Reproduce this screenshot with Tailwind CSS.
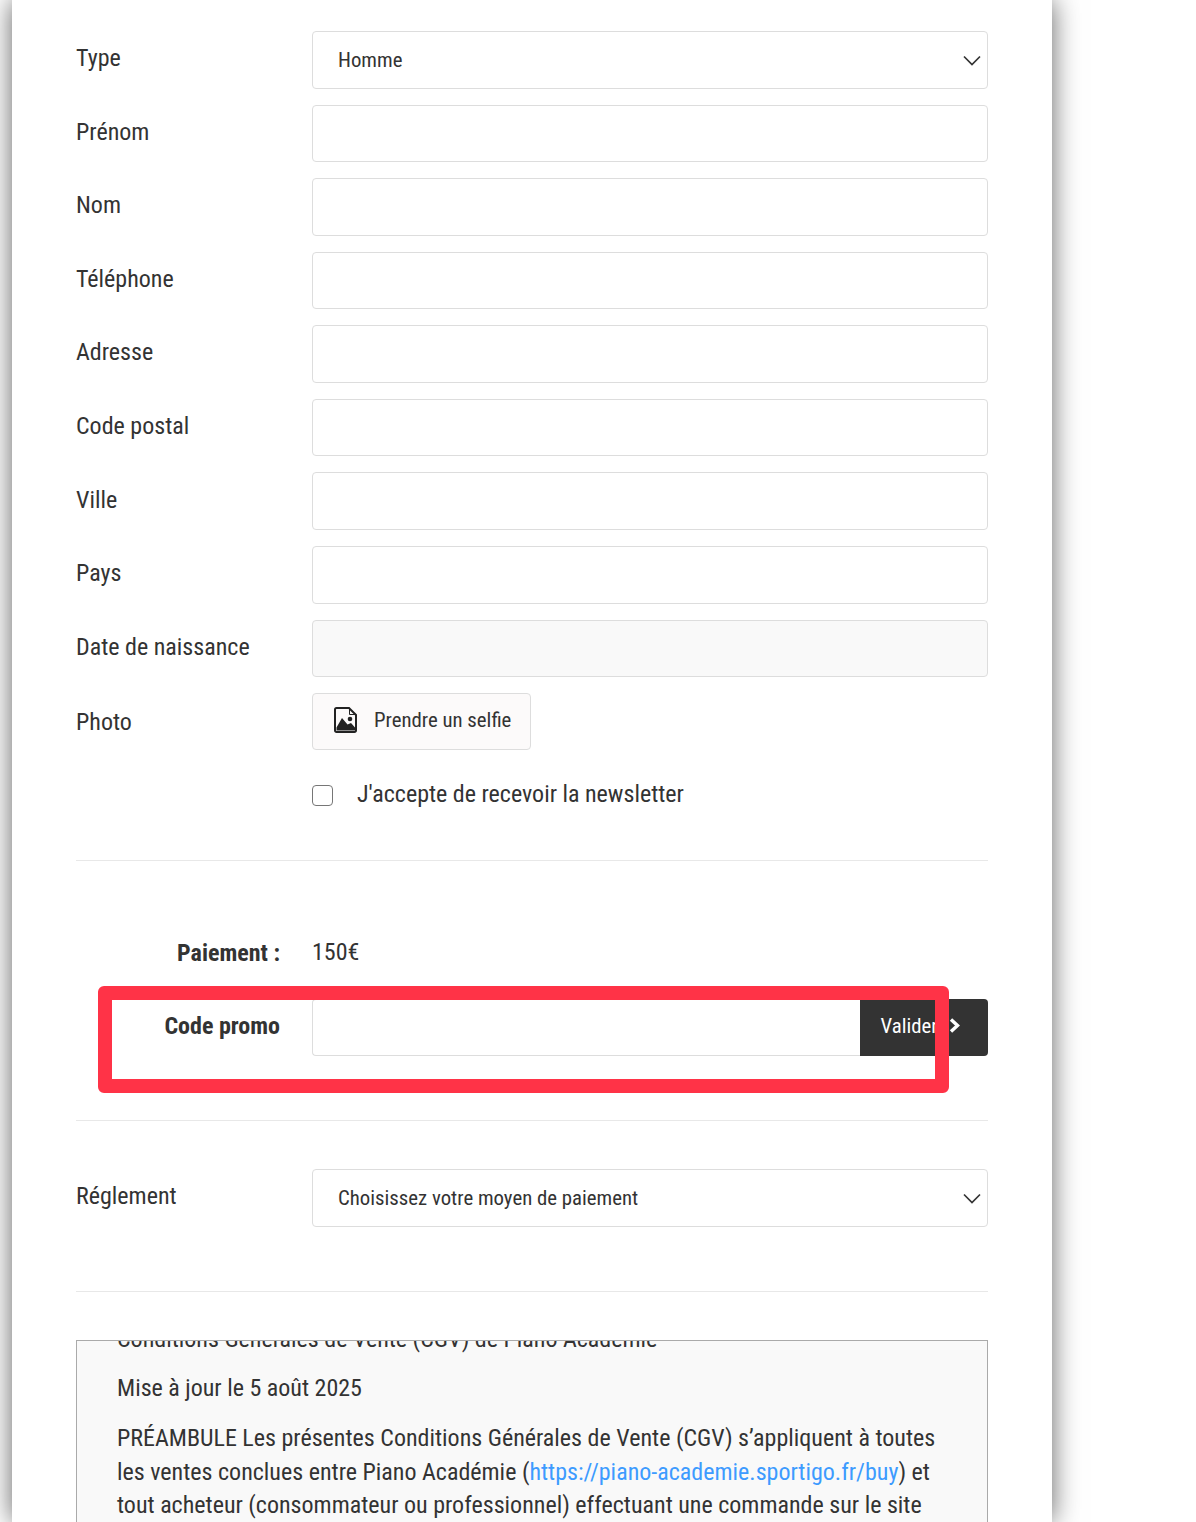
<!DOCTYPE html>
<html lang="fr">
<head>
  <meta charset="UTF-8" />
  <title>Inscription</title>
  <script src="https://cdn.jsdelivr.net/npm/@tailwindcss/browser@4"></script>
</head>
<body class="bg-white h-[1522px] overflow-hidden font-['Roboto',sans-serif] [font-stretch:75%] text-[#333]">

  <div class="relative ml-3 w-[1040px] h-[1522px] bg-white shadow-[0_0_26px_rgba(0,0,0,0.62)] px-16 pt-[30.95px]">

    <!-- Identite -->
    <div class="flex mb-4 h-[57.59px]">
      <label class="w-[236px] text-[24px] leading-[55px]">Type</label>
      <div class="relative w-[676px] border border-[#ddd] rounded text-[20.8px] leading-[56px] pl-[25px]">Homme
        <svg class="absolute right-[6px] top-[23px] w-[18px] h-[11px]" viewBox="0 0 18 11" fill="none" stroke="#333" stroke-width="1.700"><path d="M1 1.500l8 8 8-8"/></svg>
      </div>
    </div>
    <div class="flex mb-4 h-[57.59px]">
      <label class="w-[236px] text-[24px] leading-[55px]">Prénom</label>
      <input type="text" class="w-[676px] border border-[#ddd] rounded" />
    </div>
    <div class="flex mb-4 h-[57.59px]">
      <label class="w-[236px] text-[24px] leading-[55px]">Nom</label>
      <input type="text" class="w-[676px] border border-[#ddd] rounded" />
    </div>
    <div class="flex mb-4 h-[57.59px]">
      <label class="w-[236px] text-[24px] leading-[55px]">Téléphone</label>
      <input type="text" class="w-[676px] border border-[#ddd] rounded" />
    </div>
    <div class="flex mb-4 h-[57.59px]">
      <label class="w-[236px] text-[24px] leading-[55px]">Adresse</label>
      <input type="text" class="w-[676px] border border-[#ddd] rounded" />
    </div>
    <div class="flex mb-4 h-[57.59px]">
      <label class="w-[236px] text-[24px] leading-[55px]">Code postal</label>
      <input type="text" class="w-[676px] border border-[#ddd] rounded" />
    </div>
    <div class="flex mb-4 h-[57.59px]">
      <label class="w-[236px] text-[24px] leading-[56px]">Ville</label>
      <input type="text" class="w-[676px] border border-[#ddd] rounded" />
    </div>
    <div class="flex mb-4 h-[57.59px]">
      <label class="w-[236px] text-[24px] leading-[55px]">Pays</label>
      <input type="text" class="w-[676px] border border-[#ddd] rounded" />
    </div>
    <div class="flex mb-4 h-[57.59px]">
      <label class="w-[236px] text-[24px] leading-[55px]">Date de naissance</label>
      <div class="w-[676px] border border-[#ddd] rounded bg-[#f9f9f9]"></div>
    </div>
    <div class="flex h-[57px]">
      <label class="w-[236px] text-[24px] leading-[58px]">Photo</label>
      <div class="flex items-center w-[219px] border border-[#ddd] rounded bg-[#fcfafa] pl-[21px]">
        <svg class="w-[23px] h-[26px] mr-[17px] -mt-[3px]" viewBox="0 0 23 26">
          <path d="M2.500 1h12.500l7 7v15.500a1.500 1.500 0 0 1-1.500 1.500h-18a1.500 1.500 0 0 1-1.500-1.500v-21a1.500 1.500 0 0 1 1.500-1.500z" fill="none" stroke="#222" stroke-width="2"/>
          <path d="M15.500 1.500v6h6" fill="none" stroke="#222" stroke-width="1"/>
          <path d="M2.500 23.500v-3l5.500-9.500 5.500 6.500 3.500-1.500 4 4.500v3z" fill="#222"/>
          <circle cx="16" cy="12" r="2.300" fill="#222"/>
        </svg>
        <span class="text-[20.8px] -mt-[2px]">Prendre un selfie</span>
      </div>
    </div>
    <div class="flex items-center ml-[236px] mt-[25.6px] h-[36px]">
      <span class="w-[21px] h-[21px] mt-[3px] border border-[#767676] rounded-[4px] mr-[24px]"></span>
      <span class="text-[24px]">J'accepte de recevoir la newsletter</span>
    </div>

    <hr class="mt-[48px] border-[#e8e8e8]" />

    <!-- Paiement -->
    <div class="flex mt-[72px] h-[42px]">
      <div class="w-[204px] text-right font-bold text-[24px] leading-[40px]">Paiement :</div>
      <div class="ml-[32px] text-[24px] leading-[38px]">150€</div>
    </div>
    <div class="flex mt-[24px] h-[57.59px]">
      <div class="w-[204px] text-right font-bold text-[24px] leading-[54px]">Code promo</div>
      <input type="text" class="ml-[32px] w-[548px] border border-[#ddd] border-r-0 rounded-l" />
      <div class="flex items-center w-[128px] bg-[#333] text-white rounded-r pl-[20.5px] text-[20.8px]"><span class="-mt-[2px]">Valider</span>
        <svg class="w-[11px] h-[15px] ml-[11px] -mt-1" viewBox="0 0 11 15" fill="none" stroke="#fff" stroke-width="3.400"><path d="M2 1.500l6.500 6-6.500 6"/></svg>
      </div>
    </div>

    <hr class="mt-[64px] border-[#e8e8e8]" />

    <div class="flex mt-[48px] h-[57.59px]">
      <label class="w-[236px] text-[24px] leading-[55px]">Réglement</label>
      <div class="relative w-[676px] border border-[#ddd] rounded text-[20.8px] leading-[56px] pl-[25px]">Choisissez votre moyen de paiement
        <svg class="absolute right-[6px] top-[23px] w-[18px] h-[11px]" viewBox="0 0 18 11" fill="none" stroke="#333" stroke-width="1.700"><path d="M1 1.500l8 8 8-8"/></svg>
      </div>
    </div>

    <hr class="mt-[64px] border-[#e8e8e8]" />

    <!-- CGV -->
    <div class="mt-[48px] h-[300px] overflow-hidden border border-[#aaa] bg-[#f9f9f9] px-10 text-[24px] leading-[33.6px]">
      <p class="-mt-[18px] mb-4">Conditions Générales de Vente (CGV) de Piano Académie</p>
      <p class="mb-4">Mise à jour le 5 août 2025</p>
      <p>PRÉAMBULE Les présentes Conditions Générales de Vente (CGV) s’appliquent à toutes les ventes conclues entre Piano Académie (<a class="text-[#3d9bff]">https://piano-academie.sportigo.fr/buy</a>) et tout acheteur (consommateur ou professionnel) effectuant une commande sur le site</p>
    </div>

    <!-- Annotation -->
    <div class="absolute left-[86px] top-[986px] w-[851px] h-[107px] border-[14px] border-[#ff3347] rounded-md"></div>
  </div>

</body>
</html>
